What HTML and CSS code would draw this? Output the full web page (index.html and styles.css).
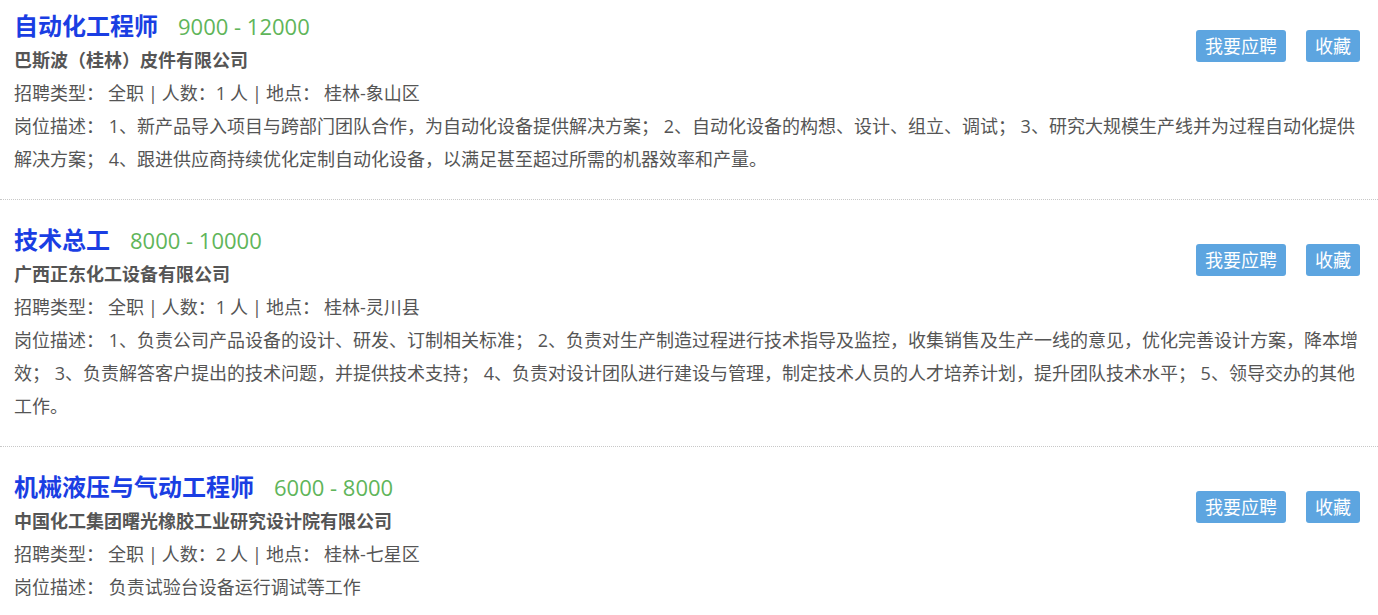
FILE: index.html
```html
<!DOCTYPE html>
<html lang="zh-CN">
<head>
<meta charset="utf-8">
<title>职位列表</title>
<link rel="stylesheet" href="styles.css">
</head>
<body>
<div class="list">
  <div class="job">
    <div class="head">
      <div class="title-row"><span class="title">自动化工程师</span><span class="salary">9000 - 12000</span></div>
      <div class="company">巴斯波（桂林）皮件有限公司</div>
    </div>
    <div class="actions"><a class="btn">我要应聘</a><a class="btn">收藏</a></div>
    <div class="info">招聘类型： 全职 | 人数：1 人 | 地点： 桂林-象山区</div>
    <div class="desc">岗位描述： 1、新产品导入项目与跨部门团队合作，为自动化设备提供解决方案； 2、自动化设备的构想、设计、组立、调试； 3、研究大规模生产线并为过程自动化提供解决方案； 4、跟进供应商持续优化定制自动化设备，以满足甚至超过所需的机器效率和产量。</div>
  </div>
  <div class="job">
    <div class="head">
      <div class="title-row"><span class="title">技术总工</span><span class="salary">8000 - 10000</span></div>
      <div class="company">广西正东化工设备有限公司</div>
    </div>
    <div class="actions"><a class="btn">我要应聘</a><a class="btn">收藏</a></div>
    <div class="info">招聘类型： 全职 | 人数：1 人 | 地点： 桂林-灵川县</div>
    <div class="desc">岗位描述： 1、负责公司产品设备的设计、研发、订制相关标准； 2、负责对生产制造过程进行技术指导及监控，收集销售及生产一线的意见，优化完善设计方案，降本增效； 3、负责解答客户提出的技术问题，并提供技术支持； 4、负责对设计团队进行建设与管理，制定技术人员的人才培养计划，提升团队技术水平； 5、领导交办的其他工作。</div>
  </div>
  <div class="job">
    <div class="head">
      <div class="title-row"><span class="title">机械液压与气动工程师</span><span class="salary">6000 - 8000</span></div>
      <div class="company">中国化工集团曙光橡胶工业研究设计院有限公司</div>
    </div>
    <div class="actions"><a class="btn">我要应聘</a><a class="btn">收藏</a></div>
    <div class="info">招聘类型： 全职 | 人数：2 人 | 地点： 桂林-七星区</div>
    <div class="desc">岗位描述： 负责试验台设备运行调试等工作</div>
  </div>
</div>
</body>
</html>
```

FILE: styles.css
```css
html, body {
  margin: 0;
  padding: 0;
  background: #fff;
}
body {
  font-family: "Open Sans", "Noto Sans CJK SC", sans-serif;
  color: #555;
  font-size: 18px;
}
.list {
  display: flex;
  flex-direction: column;
}
.job {
  display: grid;
  grid-template-columns: 1fr auto;
  grid-template-areas:
    "head actions"
    "info info"
    "desc desc";
  padding: 22px 18px 23px 14px;
  border-bottom: 1px dotted #c8c8c8;
}
.job:first-child {
  padding-top: 8px;
}
.head {
  grid-area: head;
}
.title-row {
  height: 36px;
  line-height: 36px;
  white-space: nowrap;
}
.title {
  font-size: 24px;
  font-weight: 700;
  color: #1a3ee3;
}
.salary {
  margin-left: 20px;
  font-size: 22px;
  color: #5fb55a;
}
.company {
  line-height: 33px;
  font-weight: 700;
  color: #555;
}
.actions {
  grid-area: actions;
  display: flex;
  gap: 20px;
  align-self: start;
  margin-top: 22px;
}
.btn {
  display: block;
  height: 32px;
  line-height: 32px;
  padding: 0 9px;
  background: #5da5e0;
  color: #fff;
  border-radius: 3px;
  font-size: 18px;
}
.info {
  grid-area: info;
  line-height: 33px;
  word-spacing: -0.7px;
}
.desc {
  grid-area: desc;
  line-height: 33px;
}
```
